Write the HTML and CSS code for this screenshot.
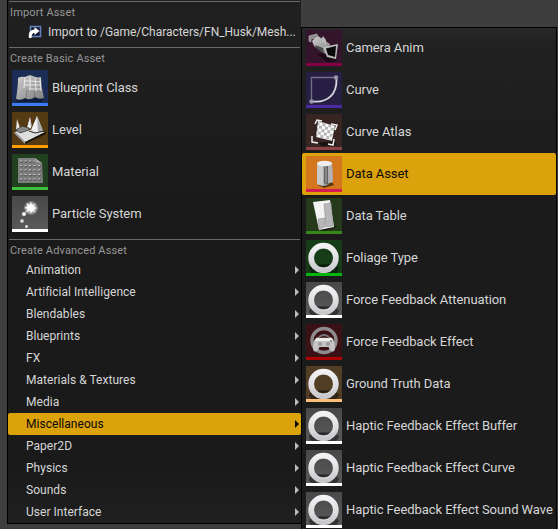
FILE: index.html
```html
<!DOCTYPE html>
<html lang="en">
<head>
<meta charset="utf-8">
<title>Create Asset</title>
<link rel="stylesheet" href="styles.css">
</head>
<body>
<svg class="defs" aria-hidden="true">
  <defs>
    <linearGradient id="metal" x1="0" y1="0" x2="1" y2="1"><stop offset="0" stop-color="#d0d0d0"/><stop offset="1" stop-color="#7d7d7d"/></linearGradient>
    <linearGradient id="ringfill" x1="0" y1="0" x2="0" y2="1"><stop offset="0" stop-color="#f2f1f4"/><stop offset=".6" stop-color="#dddce0"/><stop offset="1" stop-color="#c8c7cc"/></linearGradient>
    <radialGradient id="glow"><stop offset="0" stop-color="#fff"/><stop offset=".4" stop-color="#fff" stop-opacity=".85"/><stop offset="1" stop-color="#fff" stop-opacity="0"/></radialGradient>
    <pattern id="checks" width="6" height="6" patternUnits="userSpaceOnUse" patternTransform="rotate(10)"><path fill="#fff" d="M0 0h6v6H0z"/><path fill="#b5b5b5" d="M0 0h3v3H0zM3 3h3v3H3z"/></pattern>
    <symbol id="ring" viewBox="0 0 36 36">
      <path fill="#000" opacity=".42" d="M3 28q3-3 14-3t16 3q-1 5-4 5H7q-4 0-4-5z"/>
      <path stroke="#000" stroke-opacity=".55" d="M12 25h12"/>
      <circle cx="17.5" cy="18" r="12.5" fill="none" stroke="url(#ringfill)" stroke-width="5.4"/>
      <circle cx="17.5" cy="18" r="9.900" fill="none" stroke="#fff" stroke-opacity=".7" stroke-width=".8"/>
    </symbol>
  </defs>
</svg>
<main class="stage">
  <nav class="menu">
    <section class="group group-import">
      <h2>Import Asset</h2>
      <div class="import">
        <svg viewBox="0 0 14 14"><path fill="#10182c" stroke="#6482c0" stroke-width="1.500" d="M2.500 1.500h10v10h-10z"/><path fill="#fff" d="M6.500 2l5 4-5 4V7.700Q3.500 8 3.500 13H1Q-.5 5 6.500 4.500z"/></svg>
        <span>Import to /Game/Characters/FN_Husk/Mesh...</span>
      </div>
    </section>
    <section class="group group-basic">
      <h2>Create Basic Asset</h2>
      <div class="asset"><span class="thumb blueprint"><svg viewBox="0 0 36 36"><path fill="#07122c" opacity=".6" d="M3 30l5-4 24 2-2 4H5z"/><path fill="url(#metal)" d="M6 8q3-2 7-1 4-3 8-1 3 2 8 1 0 10 3 21-5 2-9-1-5 4-10 1-4 3-9 1 2-12 2-21z"/><path fill="none" stroke="#f5f5f5" stroke-width=".8" d="M13 7l-1 11M18 6v14M23 7l1 14M28 8l1 13M12 11h6l11 1M12 15h17M17 19h12"/><path stroke="#555" stroke-opacity=".45" d="M14 29l1-9M23 27l-1-6"/></svg></span><span>Blueprint Class</span></div>
      <div class="asset"><span class="thumb level"><svg viewBox="0 0 36 36"><path fill="#171005" d="M2 21l11 11 21-10-1-3z"/><path fill="#dedede" d="M3 20l9-3 21 3-20 10z"/><path fill="#aaa" d="M3 20l10 10v2L2 21z"/><path fill="#f1f1f1" d="M19 18l6-14 6 15-6 1z"/><path fill="#aaa" d="M25 4l6 15-5 1zM15 16l3-11 2 9-2 3z"/><path fill="#ececec" d="M15 16l3-11 1 11zM4 18L5 7l3 9z"/><path fill="#888" stroke="#292929" stroke-width=".7" d="M4 18l6-4 7 2v2l-9 3z"/><path fill="none" stroke="#272727" d="M17 19l6 2 9-2"/></svg></span><span>Level</span></div>
      <div class="asset"><span class="thumb material"><svg viewBox="0 0 36 36"><path fill="#7f7f7f" d="M6 4h17l7 5 1 20H6z"/><path fill="#a8a8a8" d="M23 4l7 5-6-1z"/><path fill="none" stroke="#5e5e5e" stroke-width="2.200" stroke-dasharray="2.800 1.700" d="M8 8h15M8 12.500h21M8 17h21M8 21.500h21M8 26h21"/><path fill="none" stroke="#c8c8c8" stroke-dasharray="2 2.500" d="M8 7h15M8 11.500h21M8 16h21M8 20.500h21M8 25h21"/></svg></span><span>Material</span></div>
      <div class="asset"><span class="thumb plain"><svg viewBox="0 0 36 36"><circle cx="19" cy="12" r="7.500" fill="url(#glow)"/><path fill="#fff" d="M19 5l1 5 4-3-3 4 5 1-5 1 3 4-4-3-1 4-1-4-5 3 3-4-4-1 4-2-2-3 4 2z"/><circle cx="12" cy="18" r="2.800" fill="url(#glow)"/><circle cx="12" cy="18" r="1.500" fill="#fff"/><circle cx="10" cy="25" r="2.400" fill="url(#glow)"/><circle cx="10" cy="25" r="1.200" fill="#ddd"/><circle cx="14.500" cy="30.500" r="2" fill="url(#glow)"/></svg></span><span>Particle System</span></div>
    </section>
    <section class="group group-advanced">
      <h2>Create Advanced Asset</h2>
      <div class="sub">Animation</div>
      <div class="sub">Artificial Intelligence</div>
      <div class="sub">Blendables</div>
      <div class="sub">Blueprints</div>
      <div class="sub">FX</div>
      <div class="sub">Materials &amp; Textures</div>
      <div class="sub">Media</div>
      <div class="sub selected">Miscellaneous</div>
      <div class="sub">Paper2D</div>
      <div class="sub">Physics</div>
      <div class="sub">Sounds</div>
      <div class="sub">User Interface</div>
    </section>
  </nav>
  <nav class="submenu">
    <div class="asset"><span class="thumb camera"><svg viewBox="0 0 36 36"><path fill="#160611" opacity=".8" d="M10 23l8 1 13 7-10 1z"/><path fill="#8c8c8c" stroke="#b5b5b5" stroke-width=".7" d="M3 6l8-2 1 4-7 1v3l-2-1z"/><path fill="url(#metal)" d="M6 11l6-5 12 8-2 11-6-3-8-6z"/><path fill="#b9b9b9" d="M15 10l2-4 3 4v5z"/><path fill="#4b4b4b" d="M9 15l8 3 1 5-8-5z"/><path fill="#b9b9b9" d="M17 17l15-3-2 15-9-2z"/><path fill="#080808" d="M20 18.500l10-2.500-1 11-7-2z"/></svg></span><span>Camera Anim</span></div>
    <div class="asset"><span class="thumb curve"><svg viewBox="0 0 36 36"><path fill="none" stroke="#77708a" stroke-width="1.300" d="M5.500 29V5.500H30"/><path fill="none" stroke="#d8d5e2" stroke-width="1.800" d="M30.500 7C31 22 22 31 7 29.500"/><circle cx="30" cy="5.500" r="2.200" fill="#9995a8"/><circle cx="5.500" cy="29.500" r="2.200" fill="#9995a8"/></svg></span><span>Curve</span></div>
    <div class="asset"><span class="thumb atlas"><svg viewBox="0 0 36 36"><path fill="#100b0b" opacity=".7" d="M11 29l17-2 3 4-15 1z"/><path fill="url(#checks)" d="M12 7l17 5-3 15-16-4z"/><path fill="none" stroke="#eee" stroke-width="1.500" d="M9 10l2-4 5 1M25 10l6 1-2 5M6 22v6l6 1M22 30l5 1 1-6"/></svg></span><span>Curve Atlas</span></div>
    <div class="asset selected"><span class="thumb data"><svg viewBox="0 0 36 36"><path fill="#58370f" d="M12 29l14-3 2 3-10 3z"/><path fill="#a8a8a8" d="M11 7l15-1 1 20-4 1-1 2-5 1-6-2z"/><path fill="#c9c9c9" d="M11 8l6 2v20l-6-2z"/><path fill="#626262" d="M18 11l4-2v20l-4-2z"/><path fill="#888" d="M19 11l2-1v17l-2-1z"/><path fill="#b2b2b2" d="M22 10l4-2 1 18-4 1z"/><ellipse cx="18.500" cy="7.500" rx="7.500" ry="2.700" fill="#eee"/></svg></span><span>Data Asset</span></div>
    <div class="asset"><span class="thumb table"><svg viewBox="0 0 36 36"><path fill="#071007" opacity=".7" d="M12 31l15-4 4 2-13 4z"/><path fill="#f3f3f3" d="M7 4l17-2 4 27-15 3z"/><path fill="#b7b7b7" stroke="#888" stroke-width=".5" d="M18 6l7-1 2 23-7 1zM12 21l7-1v9l-6 2z"/></svg></span><span>Data Table</span></div>
    <div class="asset"><span class="thumb foliage"><svg><use href="#ring"/></svg></span><span>Foliage Type</span></div>
    <div class="asset"><span class="thumb plain"><svg><use href="#ring"/></svg></span><span>Force Feedback Attenuation</span></div>
    <div class="asset"><span class="thumb force"><svg viewBox="0 0 36 36"><circle cx="18" cy="16.500" r="12" fill="none" stroke="#8d8b8b" stroke-width="3.400"/><path fill="none" stroke="#777" stroke-width="2" d="M13 13q5-4 10 0"/><path fill="#c4c4c4" d="M10 14q2-1.500 4 0h8q2-1.500 4 0 3 3 3 9 0 5-2.500 4.500Q24 27 22.500 23h-9Q12 27 9.500 27.500 7 28 7 23q0-6 3-9z"/><path fill="#ededed" d="M10 14.500q8-1.500 16 0l1 2.500H9z"/><circle cx="14" cy="20" r="2" fill="#999"/><circle cx="22" cy="20" r="2" fill="#999"/><circle cx="25" cy="17" r="1" fill="#777"/></svg></span><span>Force Feedback Effect</span></div>
    <div class="asset"><span class="thumb ground"><svg><use href="#ring"/></svg></span><span>Ground Truth Data</span></div>
    <div class="asset"><span class="thumb plain"><svg><use href="#ring"/></svg></span><span>Haptic Feedback Effect Buffer</span></div>
    <div class="asset"><span class="thumb plain"><svg><use href="#ring"/></svg></span><span>Haptic Feedback Effect Curve</span></div>
    <div class="asset"><span class="thumb plain"><svg><use href="#ring"/></svg></span><span>Haptic Feedback Effect Sound Wave</span></div>
  </nav>
</main>
</body>
</html>
```
FILE: styles.css
```css
* { box-sizing: border-box; }
body {
  margin: 0;
  overflow: hidden;
  background: #3e3e3e;
  color: #d6d6d6;
  font-family: Roboto, "Liberation Sans", sans-serif;
  font-size: 13px;
}
.defs { display: block; width: 0; height: 0; }
.stage {
  display: grid;
  grid-template-columns: 294px 256px;
  height: 529px;
  padding-left: 7px;
  overflow: hidden;
}
.menu {
  height: 524px;
  padding-top: 1px;
  border-left: 1px solid #000;
  border-bottom: 1px solid #000;
  background: linear-gradient(#202020, #1a1a1a 40%, #1a1a1a 90%, #202020);
}
.submenu {
  height: 502px;
  margin-top: 27px;
  border: solid #000;
  border-width: 1px 1px 0;
  background: linear-gradient(#282828, #212121 15px, #1b1b1b 160px);
}
.group::before {
  content: "";
  display: block;
  height: 1px;
  margin: 0 1px;
  background: #696969;
}
.group-import { height: 46px; }
.group-basic { height: 192px; }
h2 {
  height: 19px;
  margin: 0;
  padding: 2px 0 0 2px;
  color: #979797;
  font-size: 11px;
  font-weight: 400;
  line-height: 18px;
  letter-spacing: .15px;
}
.import {
  display: flex;
  align-items: center;
  height: 22px;
  padding-left: 20px;
  gap: 6px;
  font-size: 12px;
  letter-spacing: -.03px;
  white-space: nowrap;
}
.import svg { flex: none; width: 14px; height: 14px; }
.asset {
  display: flex;
  align-items: center;
  height: 42px;
  padding-left: 4px;
  gap: 4px;
  letter-spacing: -.07px;
  white-space: nowrap;
}
.asset > span:last-child { padding-bottom: 2px; }
.submenu .asset:first-child { height: 41px; padding-bottom: 1px; }
.selected {
  border-radius: 2px;
  background: #dca20b;
  color: #080808;
}
.thumb {
  flex: none;
  width: 36px;
  height: 36px;
  overflow: hidden;
  border-bottom: 3px solid #fff;
}
.thumb svg { display: block; width: 36px; height: 36px; }
.blueprint { background: #1c2d55; border-color: #3d7af5; }
.level { background: #553b13; border-color: #ff9c00; }
.material { background: #214020; border-color: #3fc13f; }
.plain { background: linear-gradient(#484848, #595959); }
.camera { background: #34142a; border-color: #850044; }
.curve { background: #271f43; border-color: #4d29a4; }
.atlas { background: #382423; border-color: #8b4244; }
.data { background: #d4761e; border-color: #d51b51; }
.table { background: #25391b; border-color: #37861d; }
.foliage { background: #163d17; border-color: #05b60c; }
.force { background: #3a1114; border-color: #ad0202; }
.ground { background: #513e25; border-color: #ffbf79; }
.sub {
  display: flex;
  align-items: center;
  justify-content: space-between;
  height: 22px;
  padding: 0 2px 0 18px;
  font-size: 12px;
  letter-spacing: .03px;
}
.sub::after {
  content: "";
  border-left: 4px solid #bbb;
  border-top: 4px solid transparent;
  border-bottom: 4px solid transparent;
}
.sub.selected::after { border-left-color: #080808; }
```
